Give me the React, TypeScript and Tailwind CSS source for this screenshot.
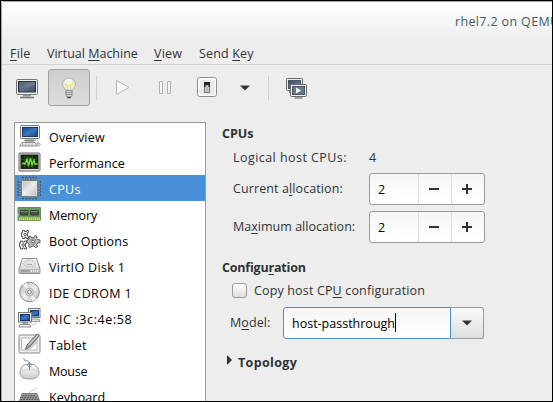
import type { ReactNode } from "react";

const Key = ({ children }: { children: ReactNode }) => (
  <span className="underline decoration-1 underline-offset-[2px] [text-decoration-skip-ink:none]">{children}</span>
);

const Svg = ({ w = 24, h = 24, children }: { w?: number; h?: number; children: ReactNode }) => (
  <svg width={w} height={h} viewBox={`0 0 ${w} ${h}`} className="block shrink-0">
    {children}
  </svg>
);

function Gradients() {
  return (
    <svg width="0" height="0" className="absolute">
      <defs>
        <linearGradient id="screen" x1="0" y1="0" x2="1" y2="1">
          <stop offset="0" stopColor="#39485a" />
          <stop offset=".55" stopColor="#5c6c83" />
          <stop offset="1" stopColor="#3e4c60" />
        </linearGradient>
        <linearGradient id="blue" x1="0" y1="0" x2="1" y2="1">
          <stop offset="0" stopColor="#17458a" />
          <stop offset=".5" stopColor="#3f76bd" />
          <stop offset="1" stopColor="#174384" />
        </linearGradient>
        <linearGradient id="metal" x1="0" y1="0" x2="1" y2="1">
          <stop offset="0" stopColor="#b5b5b5" />
          <stop offset=".5" stopColor="#ededed" />
          <stop offset="1" stopColor="#b4b4b4" />
        </linearGradient>
        <linearGradient id="soft" x1="0" y1="0" x2="0" y2="1">
          <stop offset="0" stopColor="#fff" />
          <stop offset="1" stopColor="#c9cac7" />
        </linearGradient>
        <radialGradient id="glow">
          <stop offset="0" stopColor="#fffef0" />
          <stop offset=".4" stopColor="#f7f5c4" />
          <stop offset=".75" stopColor="#e9e9e4" />
          <stop offset="1" stopColor="#dededc" />
        </radialGradient>
      </defs>
    </svg>
  );
}

const MonitorIcon = () => (
  <Svg w={24} h={24}>
    <path d="M8 18h8v2.500H8z" fill="#999" />
    <rect x="1.500" y="3.500" width="21" height="15" rx="1" fill="#f1f1ef" stroke="#73756f" />
    <rect x="3.500" y="5.500" width="17" height="10.500" fill="url(#screen)" stroke="#263347" />
    <path d="M4 6h16v3L4 13z" fill="#fff" opacity=".12" />
    <path d="M5 21.500h14" stroke="#777" strokeWidth="1.600" />
  </Svg>
);

const BulbIcon = () => (
  <Svg w={24} h={24}>
    <path d="M12 2a6.500 6.500 0 0 0-6.500 6.500c0 3.200 3.300 4.300 3.300 6.500h6.400c0-2.200 3.300-3.300 3.300-6.500A6.500 6.500 0 0 0 12 2z" fill="url(#glow)" stroke="#b5b6b1" />
    <path d="M8 5.500q3.500-3 7 0" fill="none" stroke="#fff" strokeWidth="1.500" />
    <path d="M8.500 7.500l1.500 2h4l1.500-2" fill="none" stroke="#efe66a" strokeWidth="1.300" />
    <path d="M10.500 10v5M13.500 10v5" stroke="#c9c8b0" strokeWidth=".8" />
    <path d="M9 14.500h6v5l-1.500 1.700h-3L9 19.500z" fill="#e0e0de" stroke="#888a85" />
    <path d="M9 16.500h6M9 18.500h6" stroke="#777" strokeWidth=".8" />
    <path d="M10.300 21.500h3.400" stroke="#444" strokeWidth="1.500" />
  </Svg>
);

const PowerIcon = () => (
  <Svg w={22} h={24}>
    <rect x="1.500" y="1.500" width="19" height="19" rx="2" fill="#fff" stroke="#8d8f8b" />
    <rect x="3.500" y="3.500" width="15" height="15" rx="1" fill="#e9e9e7" />
    <rect x="8.500" y="6.500" width="5" height="10" fill="#ddd" stroke="#777" />
    <path d="M8 6h6v5H8z" fill="#222" />
    <path d="M9.500 9h3v7h-3z" fill="#bbb" />
  </Svg>
);

const ConsolesIcon = () => (
  <Svg w={22} h={24}>
    <rect x="1.500" y="2.500" width="16" height="12" rx="1" fill="#eee" stroke="#676963" />
    <rect x="3.500" y="4.500" width="12" height="8" fill="url(#screen)" stroke="#4a586b" />
    <path d="M5.500 15v2" stroke="#888" strokeWidth="3" />
    <rect x="5.500" y="8.500" width="16" height="12" rx="1" fill="#f1f1f0" stroke="#676963" />
    <rect x="7.500" y="10.500" width="12" height="8" fill="#68798f" stroke="#415065" />
    <path d="M11 11.500l5 3-5 3z" fill="#fff" />
    <path d="M9.500 22h8" stroke="#888" strokeWidth="1.500" />
  </Svg>
);

const OverviewIcon = () => (
  <Svg>
    <path d="M8 15h9v3H8z" fill="#bbb" />
    <rect x="3.500" y="1.500" width="19" height="13" rx="1" fill="#eeeeec" stroke="#777973" />
    <rect x="5.500" y="3.500" width="15" height="9" fill="url(#blue)" stroke="#153b75" />
    <path d="M7 16.500h11" stroke="#888" />
    <path d="M5 18.500h13l2 3.500H2.500z" fill="#eeeeec" stroke="#888a85" />
    <path d="M5 20.200h12" stroke="#aaa" strokeDasharray="2 1" />
    <path d="M17 16c5 0 5 2 3 3" fill="none" stroke="#bbb" />
    <ellipse cx="21.500" cy="20.500" rx="1.800" ry="1.500" fill="#ddd" stroke="#888" strokeWidth=".7" />
  </Svg>
);

const PerformanceIcon = () => (
  <Svg>
    <rect x="2" y="3" width="21" height="18" rx="1" fill="#ddd" stroke="#666862" />
    <rect x="4" y="5" width="17" height="13.500" fill="#122a12" stroke="#20251e" />
    <path d="M7.500 6v12M11.500 6v12M15.500 6v12M4 9.500h16M4 14.500h16" stroke="#315c29" strokeWidth=".6" />
    <path d="M5 14l1.500-1 1.500 1 2-5 1.500 7 2-8 1.500 7 2-5 1 4 2.500 0" fill="none" stroke="#7be239" strokeWidth="1.300" />
  </Svg>
);

const CpuIcon = () => (
  <Svg>
    <path d="M6 1.500v21M9.200 1.500v21M12.500 1.500v21M15.700 1.500v21M19 1.500v21M1.500 6h22M1.500 9.200h22M1.500 12.500h22M1.500 15.700h22M1.500 19h22" stroke="#4c545c" strokeWidth="2" strokeLinecap="round" />
    <path d="M6 2v20M9.200 2v20M12.500 2v20M15.700 2v20M19 2v20M2 6h21M2 9.200h21M2 12.500h21M2 15.700h21M2 19h21" stroke="#b0b3b3" strokeWidth=".8" />
    <rect x="4.500" y="4.500" width="16" height="16" rx="1" fill="url(#metal)" stroke="#777a7b" />
    <rect x="5.500" y="5.500" width="14" height="14" fill="none" stroke="#e4e4e2" strokeOpacity=".6" />
  </Svg>
);

const MemoryIcon = () => (
  <Svg>
    <path d="M1 5.500h22.500v13H1v-5l1-1-1-1z" fill="#6b9b61" stroke="#5b9150" />
    <path d="M3.500 8.500h7.500v4.500H3.500zM13.500 8.500h8v4.500h-8z" fill="#4a504a" stroke="#353c33" />
    <path d="M3.500 9.500h7.500M13.500 9.500h8" stroke="#858a85" />
    <path d="M12.200 6v8" stroke="#35b52f" />
    <path d="M2 16.700h21" stroke="#d9d14d" strokeWidth="3" strokeDasharray="1.500 .5" />
  </Svg>
);

const GearsIcon = () => (
  <Svg>
    <g fill="#f1f1ef" stroke="#555753" strokeLinejoin="round">
      <path d="M5.500 2.500h2v1h2v-1h2v2h-1v4h1v2h-2v-1h-2v1h-2v-2h-1v-4h1z" />
      <circle cx="8" cy="6.500" r="1.200" />
      <path d="M3.500 13h2v1h2v-1h2v2.500h-1v3.500h1v2h-2v-1h-2v1h-2v-2h-1v-4h1z" />
      <circle cx="6.200" cy="17" r="1.200" />
      <path d="M13.500 8l1 1.700h2L18 7.500l2 1-.3 2 1 1.200 2.300.3v2.500l-2.300.5-1 1.500.8 2-2 1.200-1.500-1.700h-2l-1.500 1.700-1.800-1.200.5-2-.8-1.500-1.400-.5V12l1.500-.3.700-1.200-.4-1.500z" fill="#c5c6c3" />
      <circle cx="16" cy="13.500" r="3" fill="none" stroke="#999b97" />
      <circle cx="16" cy="13.500" r="1.400" fill="#fff" />
    </g>
  </Svg>
);

const DiskIcon = () => (
  <Svg>
    <path d="M5.500 4.500h14l3.500 10.500v3.500q0 1-1 1H3q-1 0-1-1V15z" fill="url(#soft)" stroke="#888a85" />
    <path d="M2.500 15h20v4h-20z" fill="#b8bab7" />
    <ellipse cx="12.500" cy="9.500" rx="6" ry="3.500" fill="#e4e5e3" stroke="#c0c1be" />
    <path d="M10 10.500h5" stroke="#aaa" />
    <path d="M4 17h8" stroke="#888" />
    <path d="M14 17h7" stroke="#eee" strokeDasharray="1 1" strokeWidth="2" />
  </Svg>
);

const DiscIcon = () => (
  <Svg>
    <circle cx="12.500" cy="12" r="9.800" fill="url(#metal)" stroke="#888a85" />
    <path d="M12.500 12L5.500 4.500 9.500 2.500zM12.500 12l7 7.500-4 2z" fill="#fff" opacity=".65" />
    <circle cx="12.500" cy="12" r="4" fill="#ddd" stroke="#aaa" />
    <circle cx="12.500" cy="12" r="1.800" fill="#fff" stroke="#777" />
  </Svg>
);

const NicIcon = () => (
  <Svg>
    <rect x="11.500" y="2.500" width="11.500" height="9" fill="#eee" stroke="#777973" />
    <rect x="13.500" y="4.500" width="8" height="5.500" fill="url(#blue)" stroke="#123873" />
    <path d="M14 13h8l1 2.500H13z" fill="#ddd" stroke="#999" />
    <path d="M5 16h6v2H5z" fill="#aaa" />
    <rect x="1.500" y="6.500" width="13" height="9.500" fill="#eee" stroke="#777973" />
    <rect x="3.500" y="8.500" width="9" height="6" fill="url(#blue)" stroke="#123873" />
    <path d="M3 18.500h9.500l1.500 2.500H2z" fill="#eee" stroke="#888a85" />
    <path d="M15 19c5 1 5-3 2-3" fill="none" stroke="#ccc" />
  </Svg>
);

const TabletIcon = () => (
  <Svg>
    <rect x="2" y="3" width="21" height="18" rx="1" fill="#eee" stroke="#888a85" />
    <rect x="4.500" y="6" width="15.500" height="12" fill="#f8f8f6" stroke="#babbb8" />
    <path d="M9 18q7-3 11-10" fill="none" stroke="#ccc" strokeWidth="2.500" />
    <path d="M8.500 17.500l1.500-4.500L20 2q1.800.3 2 2L12.500 15z" fill="#a5a7a3" stroke="#666863" />
    <path d="M11.500 13L21 3" stroke="#ddd" />
  </Svg>
);

const MouseIcon = () => (
  <Svg>
    <path d="M6 1c3-1 0 2 3 2 3-1 3 1 3 3" fill="none" stroke="#888" />
    <path d="M8 6.500h9c3 1.500 5 5 5 8.500 0 4-4 6-9.500 6S3 19 3 15c0-3.500 2-7 5-8.500z" fill="url(#soft)" stroke="#999b97" />
    <path d="M3.500 14q4-2.500 7-2.500l2 1.500 2-1.500q3 0 7 2.500" fill="none" stroke="#d0d1cf" />
    <path d="M12.500 4v8M10.500 6.500l2-2 2 2M10.500 7.500l2 2 2-2" fill="none" stroke="#6596cf" />
  </Svg>
);

const KeyboardIcon = () => (
  <Svg>
    <path d="M12 9c1-4 8-1 7-6" fill="none" stroke="#ccc" />
    <path d="M5 9.500h15l3 9H2z" fill="#b5b5b5" stroke="#777973" />
    <path d="M5.500 11.500h14M4.500 13.500h16M3.500 15.500h18" stroke="#555753" strokeWidth="1.400" strokeDasharray="2 .7" />
  </Svg>
);

const devices = [
  { name: "Overview", icon: <OverviewIcon />, track: "tracking-[0.2px]" },
  { name: "Performance", icon: <PerformanceIcon />, track: "tracking-[0px]" },
  { name: "CPUs", icon: <CpuIcon />, track: "tracking-[0.3px]", selected: true },
  { name: "Memory", icon: <MemoryIcon />, track: "tracking-[-0.1px]" },
  { name: "Boot Options", icon: <GearsIcon />, track: "tracking-[0.2px]" },
  { name: "VirtIO Disk 1", icon: <DiskIcon />, track: "tracking-[0.35px]" },
  { name: "IDE CDROM 1", icon: <DiscIcon />, track: "tracking-[0.4px]" },
  { name: "NIC :3c:4e:58", icon: <NicIcon />, track: "tracking-[0.6px]" },
  { name: "Tablet", icon: <TabletIcon />, track: "tracking-[0.25px]" },
  { name: "Mouse", icon: <MouseIcon />, track: "tracking-[-0.2px]" },
  { name: "Keyboard", icon: <KeyboardIcon />, track: "tracking-[0.05px]" },
];

const SpinBox = () => (
  <div className="flex h-8 w-[116px] rounded-[3px] border border-[#999b98] bg-gradient-to-b from-[#f6f6f6] to-white text-black">
    <span className="w-12 pt-px pl-2 leading-[30px]">2</span>
    <span className="flex w-[33px] items-center border-l border-[#dcdcdc] pl-[10px]">
      <span className="h-0.5 w-2.5 bg-[#2e3436]" />
    </span>
    <span className="flex w-[33px] items-center border-l border-[#dcdcdc] pl-[10px]">
      <Svg w={10} h={10}>
        <path d="M0 5h10M5 0v10" stroke="#2e3436" strokeWidth="2" />
      </Svg>
    </span>
  </div>
);

const DownArrow = () => (
  <Svg w={10} h={6}>
    <path d="M0 .5h10L5 5.500z" fill="#2e3436" />
  </Svg>
);

export default function App() {
  return (
    <div className="flex h-[402px] w-[553px] flex-col overflow-hidden border border-black bg-[#ededed] font-['Open_Sans','Noto_Sans',sans-serif] text-[12.5px] leading-[18px] whitespace-nowrap text-[#2e3436]">
      <Gradients />
      <div className="flex min-h-0 grow flex-col rounded-tl-[4px] border-t border-l border-[#a5a5a5]">
        <header className="h-[39px] shrink-0 overflow-hidden bg-gradient-to-b from-white to-[#ededed] pt-[11px] pl-[453px] tracking-[0.35px] text-[#4a5a60]">
          rhel7.2 on QEMU
        </header>
        <nav className="flex h-6 shrink-0 border-b border-[#d0d0d0] pl-2">
          <span className="w-[37px] pt-1 tracking-[0.2px]"><Key>F</Key>ile</span>
          <span className="w-[107px] pt-1 tracking-[0px]">Virtual <Key>M</Key>achine</span>
          <span className="w-[45px] pt-1 tracking-[0.2px]"><Key>V</Key>iew</span>
          <span className="pt-1 tracking-[0.15px]">Send <Key>K</Key>ey</span>
        </nav>
        <div className="flex h-[57px] shrink-0 items-start pt-1">
          <div className="ml-[13px] flex h-[37px] items-center"><MonitorIcon /></div>
          <div className="ml-[9px] flex h-[37px] w-[42px] items-center justify-center rounded-[3px] border border-[#a1a1a1] bg-gradient-to-b from-[#cfcfcf] to-[#dcdcdc]"><BulbIcon /></div>
          <div className="mt-[7px] ml-1.5 h-6 w-px bg-[#d0d0d0]" />
          <div className="ml-[18px] flex h-[37px] items-center">
            <Svg w={16} h={18}><path d="M1.500 1.500L14 8.500 1.500 15.500z" fill="#f7f7f7" stroke="#b5b6b3" /></Svg>
          </div>
          <div className="ml-[27px] flex h-[37px] items-center">
            <Svg w={14} h={14}><path d="M1.500 .500h3v12h-3zM9.500 .500h3v12h-3z" fill="#f8f8f8" stroke="#b0b1ae" /></Svg>
          </div>
          <div className="ml-6 flex h-[37px] items-center"><PowerIcon /></div>
          <div className="ml-[22px] flex h-[37px] items-center"><DownArrow /></div>
          <div className="mt-[7px] ml-[18px] h-6 w-px bg-[#d0d0d0]" />
          <div className="ml-4 flex h-[37px] items-center"><ConsolesIcon /></div>
        </div>
        <main className="flex min-h-0 grow overflow-hidden pl-3">
          <div className="w-48 shrink-0 border border-b-0 border-[#999b98] bg-white text-black">
            {devices.map((d) => (
              <div key={d.name} className={d.selected ? "flex h-[26px] items-center bg-[#4a90d9] pl-0.5 text-white" : "flex h-[26px] items-center pl-0.5"}>
                {d.icon}
                <span className={`pt-[3px] pl-2 ${d.track}`}>{d.name}</span>
              </div>
            ))}
          </div>
          <section className="w-[280px] shrink-0 pt-0.5 pl-4">
            <h2 className="h-[18px] pt-px font-bold">CPUs</h2>
            <div className="grid grid-cols-[136px_116px] gap-y-1.5 pl-[11px]">
              <span className="h-[25px] pt-[7px] tracking-[0.45px]">Logical host CPUs:</span>
              <span className="pt-[7px]">4</span>
              <span className="pt-[7px] tracking-[0.1px]">Current a<Key>l</Key>location:</span>
              <SpinBox />
              <span className="pt-[7px] tracking-[0.02px]">Ma<Key>x</Key>imum allocation:</span>
              <SpinBox />
            </div>
            <h2 className="mt-4 font-bold tracking-[-0.2px]">Configu<Key>r</Key>ation</h2>
            <div className="mt-[4px] flex h-[18px] items-center pl-2.5">
              <span className="mr-[7px] h-[15px] w-[15px] rounded-[3px] border border-[#999b98] bg-gradient-to-b from-white to-[#dedede]" />
              <span className="pt-0.5 tracking-[0.15px]">Copy host CP<Key>U</Key> configuration</span>
            </div>
            <div className="mt-2 flex h-8 pl-2">
              <span className="w-[53px] pt-[7px] tracking-[0.1px]">M<Key>o</Key>del:</span>
              <div className="flex w-[168px] items-center rounded-l-[3px] border border-[#4a90d9] bg-gradient-to-b from-[#f6f6f6] to-white pl-2 text-black">
                <span className="pt-0.5 tracking-[0px]">host-passthrough</span>
                <span className="-mt-0.5 h-[19px] w-px bg-black" />
              </div>
              <div className="flex w-[33px] items-center justify-center rounded-r-[3px] border border-l-0 border-[#999b98] bg-gradient-to-b from-[#fafafa] to-[#dedede]"><DownArrow /></div>
            </div>
            <div className="mt-[15px] flex items-start pl-[5px]">
              <Svg w={5} h={12}><path d="M0 1v10l5-5z" fill="#2e3436" /></Svg>
              <span className="pl-1.5 font-bold tracking-[0.35px]">Topology</span>
            </div>
          </section>
        </main>
      </div>
    </div>
  );
}
